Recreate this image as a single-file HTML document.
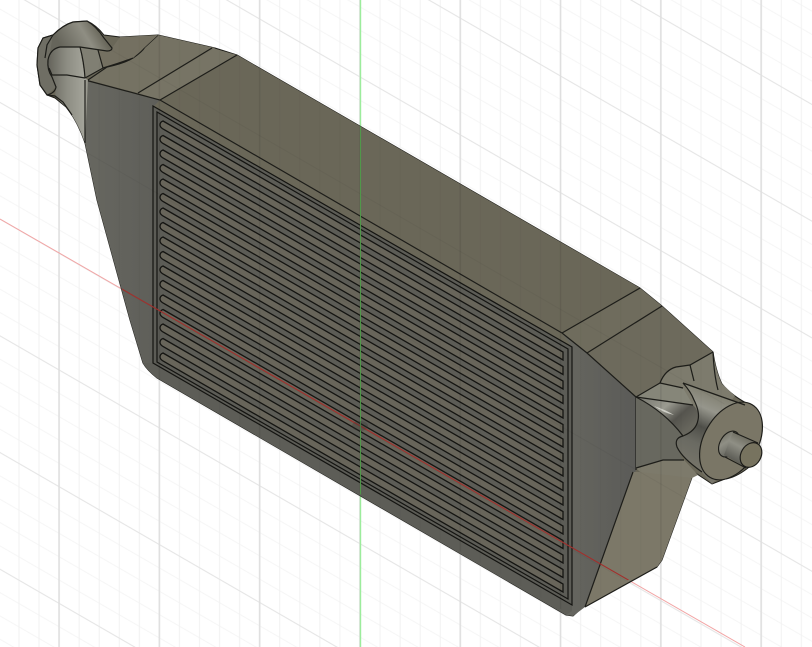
<!DOCTYPE html>
<html><head><meta charset="utf-8"><title>Intercooler CAD model</title>
<style>html,body{margin:0;padding:0;background:#fff;width:812px;height:647px;overflow:hidden}svg{display:block;filter:blur(.35px)}</style></head>
<body>
<svg width="812" height="647" viewBox="0 0 812 647" xmlns="http://www.w3.org/2000/svg">
<defs>
<pattern id="vmin" width="20.06" height="647" patternUnits="userSpaceOnUse" patternTransform="translate(350,0)"><rect x="9.5" width="1" height="647" fill="#f1f1f1"/></pattern>
<pattern id="vmaj" width="100.3" height="647" patternUnits="userSpaceOnUse" patternTransform="translate(350,0)"><rect x="9.2" width="1.5" height="647" fill="#dedede"/></pattern>
<pattern id="dmin" width="100" height="23.34" patternUnits="userSpaceOnUse" patternTransform="matrix(1,.5774,0,1,360,415.33)"><rect y="11.2" width="100" height="1" fill="#f4f4f4"/></pattern>
<pattern id="dmaj" width="100" height="116.7" patternUnits="userSpaceOnUse" patternTransform="matrix(1,.5774,0,1,360,415.33)"><rect y="11.2" width="100" height="1" fill="#e2e2e2"/></pattern>
<pattern id="vminD" width="20.06" height="647" patternUnits="userSpaceOnUse" patternTransform="translate(350,0)"><rect x="9.5" width="1" height="647" fill="#000" opacity=".03"/></pattern>
<pattern id="vmajD" width="100.3" height="647" patternUnits="userSpaceOnUse" patternTransform="translate(350,0)"><rect x="9.2" width="1.5" height="647" fill="#000" opacity=".06"/></pattern>
<pattern id="dmajD" width="100" height="116.7" patternUnits="userSpaceOnUse" patternTransform="matrix(1,.5774,0,1,360,415.33)"><rect y="11.2" width="100" height="1" fill="#000" opacity=".05"/></pattern>
<linearGradient id="gface" x1="0" y1="0" x2="1" y2="0"><stop offset="0" stop-color="#676760"/><stop offset="1" stop-color="#5e5e59"/></linearGradient>
<linearGradient id="gface2" x1="0" y1="0" x2="1" y2="0"><stop offset="0" stop-color="#66665f"/><stop offset="1" stop-color="#5b5b58"/></linearGradient>
<linearGradient id="cone" x1="695" y1="470" x2="728" y2="392" gradientUnits="userSpaceOnUse"><stop offset="0" stop-color="#77756a"/><stop offset=".3" stop-color="#6a6a62"/><stop offset=".5" stop-color="#4f4f49"/><stop offset=".72" stop-color="#96968c"/><stop offset="1" stop-color="#7a7868"/></linearGradient>
<linearGradient id="fin" x1="650" y1="392" x2="685" y2="432" gradientUnits="userSpaceOnUse"><stop offset="0" stop-color="#7d7d74"/><stop offset=".4" stop-color="#9a9a90"/><stop offset=".7" stop-color="#55544e"/><stop offset="1" stop-color="#67665d"/></linearGradient>
<linearGradient id="cyl" x1="733" y1="470" x2="752" y2="435" gradientUnits="userSpaceOnUse"><stop offset="0" stop-color="#3f3f3a"/><stop offset=".6" stop-color="#8f8f85"/><stop offset="1" stop-color="#5f5d50"/></linearGradient>
<linearGradient id="lcone" x1="45" y1="0" x2="92" y2="0" gradientUnits="userSpaceOnUse"><stop offset="0" stop-color="#5d5c54"/><stop offset=".45" stop-color="#8c8c82"/><stop offset=".85" stop-color="#a5a59b"/><stop offset="1" stop-color="#74726a"/></linearGradient>
<linearGradient id="ltop" x1="62" y1="48" x2="100" y2="25" gradientUnits="userSpaceOnUse"><stop offset="0" stop-color="#66655b"/><stop offset=".6" stop-color="#8f8e83"/><stop offset="1" stop-color="#5f5d50"/></linearGradient>
<clipPath id="model"><path d="M158,35 L237,55 L640,288 L662,306 L713,352 L730,392 L694,472 L662,560 L583,607 L573,616 L157,378 L143,363 L97,200 L85,143 L85,80 L120,37 Z"/></clipPath>
<path id="slat" d="M163,121 L563,352 V360 L163,129 Q160,127 160,125 Q160,122 163,121Z" fill="#68655a" stroke="#141411" stroke-width="1.3"/>
</defs>

<rect width="812" height="647" fill="#fff"/>
<rect width="812" height="647" fill="url(#dmin)"/>
<rect width="812" height="647" fill="url(#vmin)"/>
<rect width="812" height="647" fill="url(#dmaj)"/>
<rect width="812" height="647" fill="url(#vmaj)"/>
<line x1="0" y1="219" x2="745" y2="647" stroke="#f2a5a5" stroke-width="1"/>
<line x1="360.5" y1="0" x2="360.5" y2="647" stroke="#9cec9c" stroke-width="1.4"/>

<!-- silhouette -->
<path d="M158,35 L215,48 L237,55 L640,288 L662,306 L713,352 Q716,372 722,384 Q732,396 750,405 Q761,412 762,430 Q761,445 748,468 Q735,478 725,479 L712,484 L694,472 L662,560 L657,567 L583,607 L573,616 L566,615 L157,378 Q147,370 143,363 L130,320 L97,200 L85,143 Q78,122 66,107 L55,98 L47,95 L40,85 L37,65 L38,48 L43,38 L53,35 Q63,25 73,22 L87,21 Q96,25 104,35 L120,37 Z" fill="#6a6758" stroke="#1d1d19" stroke-width="1"/>

<!-- left face -->
<path d="M85,80 L160,100 L153,107 V363 L157,378 Q147,370 143,363 L130,320 L97,200 L85,143 Z" fill="url(#gface)"/>
<!-- top face -->
<path d="M160,100 L237,55 L640,288 L562,333 Z" fill="#6a6758"/>
<!-- left bands -->
<path d="M138,93 L212,48 L237,55 L160,100 Z" fill="#777465"/>
<path d="M88,80 L107,67 L133,58 L145,47 L158,35 L215,48 L138,93 Z" fill="#757263"/>
<!-- right bands -->
<path d="M562,333 L640,288 L662,306 L587,353 Z" fill="#6f6c5d"/>
<path d="M587,353 L662,306 L713,352 L636,397 Z" fill="#6d6a5c"/>
<!-- right grey face -->
<path d="M562,333 L587,353 L636,397 V470 L585,607 L573,616 L566,615 L572,605 V347 Z" fill="url(#gface2)"/>
<!-- right olive face -->
<path d="M633,472 L694,472 L662,560 L657,567 L585,607 Z" fill="#7c7868"/>

<!-- bottom band and front panel -->
<path d="M153,363 L572,605 L572,611 L566,615 L157,378 Q147,370 143,363 Z" fill="#5d5d57"/>
<path d="M153,106 L572,347 V605 L153,363 Z" fill="#5c5c56" stroke="#141411" stroke-width="1.2"/>
<path d="M157,112 L568,349 V599 L157,362 Z" fill="#5c5c56" stroke="#141411" stroke-width="1.2"/>
<use href="#slat"/>
<use href="#slat" y="14.5"/>
<use href="#slat" y="29"/>
<use href="#slat" y="43.5"/>
<use href="#slat" y="58"/>
<use href="#slat" y="72.5"/>
<use href="#slat" y="87"/>
<use href="#slat" y="101.5"/>
<use href="#slat" y="116"/>
<use href="#slat" y="130.5"/>
<use href="#slat" y="145"/>
<use href="#slat" y="159.5"/>
<use href="#slat" y="174"/>
<use href="#slat" y="188.5"/>
<use href="#slat" y="203"/>
<use href="#slat" y="217.5"/>
<use href="#slat" y="232"/>

<!-- edges of body -->
<g fill="none" stroke="#1d1d19" stroke-width="1.2">
<path d="M85,80 L160,100 L562,333"/>
<path d="M138,93 L212,48"/>
<path d="M160,100 L237,55"/>
<path d="M562,333 L640,288"/>
<path d="M587,353 L662,306"/>
<path d="M562,333 L587,353 L636,397"/>
<path d="M636,397 V470"/>
<path d="M633,472 L585,607"/>
<path d="M585,607 L657,567"/>
<path d="M88,80 L107,67 Q125,63 133,58 Q142,52 145,47 L158,35"/>
</g>

<!-- right connector -->
<path d="M636,397 L660,383 Q665,370 676,367 L690,365 L713,352 Q716,372 722,384 L735,396 L700,440 L680,436 Z" fill="#7d7b6d"/>
<path d="M636,397 L660,383 L683,388 L693,405 Z" fill="#868679"/>
<path d="M636,397 L693,405 Q700,412 698,420 Q696,431 683,436 Q665,412 636,397 Z" fill="url(#fin)"/>
<path d="M636,397 Q665,412 683,436 Q674,438 677,447 L683,460 L663,460 L636,468 Z" fill="#68685f"/>
<path d="M636,468 L663,460 L684,460 L698,475 L692,478 L640,472 Z" fill="#7d7a6b"/>
<path d="M683,383 L745,405 L761,430 L712,484 L702,472 Q682,458 677,447 Q674,438 683,436 Q696,431 698,420 Q700,412 694,400 Q691,392 683,383 Z" fill="url(#cone)"/>
<path d="M654,406 Q666,410 674,415 Q664,413 654,406Z" fill="#cfcfc7"/>
<g transform="rotate(-60 731 441)"><ellipse cx="731" cy="441" rx="42" ry="27" fill="#7a7666" stroke="#1d1d19" stroke-width="1.2"/></g>
<g transform="rotate(-60 729 444)"><ellipse cx="729" cy="444" rx="14" ry="9" fill="url(#cyl)" stroke="#1d1d19" stroke-width="1.1"/></g>
<path d="M733,432 L760,444 L747,468 L724,455 Z" fill="url(#cyl)"/>
<path d="M733,432 L758,443 M725,457 L746,468" stroke="#1d1d19" stroke-width="1.1" fill="none"/>
<g transform="rotate(-60 751 455)"><ellipse cx="751" cy="455" rx="13" ry="10" fill="#77735f" stroke="#1d1d19" stroke-width="1.2"/></g>
<g fill="none" stroke="#1d1d19" stroke-width="1.2">
<path d="M636,397 L660,383 Q665,370 676,367 L690,365 L713,352"/>
<path d="M660,383 L683,388"/>
<path d="M690,365 L694,381"/>
<path d="M713,352 Q714,375 718,390"/>
<path d="M636,397 L693,405"/>
<path d="M636,397 Q665,412 683,436"/>
<path d="M683,383 Q691,392 694,400 Q700,412 698,420 Q696,431 683,436 Q674,438 677,447 Q682,458 702,472"/>
<path d="M683,383 L745,405"/>
<path d="M636,468 L663,460 L684,460"/>
</g>

<!-- left connector -->
<path d="M53,35 Q63,25 73,22 L87,21 L97,28 L112,48 L107,51 L80,47 L60,47 L50,52 Z" fill="url(#ltop)"/>
<path d="M50,52 L60,47 L80,47 L85,78 L88,80 L85,143 Q78,122 66,107 L55,96 L56,87 L52,77 L47,62 Z" fill="url(#lcone)"/>
<path d="M80,47 L98,50 L103,68 L85,78 Z" fill="#807f73"/>
<path d="M98,50 L107,51 L112,48 L120,37 L158,35 L145,47 L133,58 L107,67 L103,68 Z" fill="#747061"/>
<path d="M38,48 L43,38 L53,35 L50,52 L47,62 L52,77 L56,87 L47,95 L40,85 L37,65 Z" fill="#6f6e64"/>
<g fill="none" stroke="#1d1d19" stroke-width="1.2">
<path d="M38,48 L43,38 L53,35 Q63,25 73,22 L87,21 Q96,26 104,38 L112,48 Q112,51 107,51 L80,47 L60,47 Q50,49 48,60 Q47,70 52,77 L56,87 Q55,93 47,95 L40,85 L37,65 Z"/>
<path d="M80,47 Q84,62 85,78"/>
<path d="M98,50 L103,68"/>
<path d="M49,68 L52,75 L67,75 L85,78"/>
<path d="M85,78 L103,68 Q120,63 133,58"/>
<path d="M47,95 L55,96 L63,102 L72,115"/>
<path d="M85,80 V143"/>
<path d="M53,35 L47,45 L45,58"/>
</g>

<!-- faint grid through the model -->
<g clip-path="url(#model)">
<rect width="812" height="647" fill="url(#vminD)"/>
<rect width="812" height="647" fill="url(#vmajD)"/>
<rect width="812" height="647" fill="url(#dmajD)"/>
<line x1="0" y1="219" x2="745" y2="647" stroke="#a22f2c" stroke-width="1.1"/>
<line x1="360.5" y1="0" x2="360.5" y2="647" stroke="#4f9f4a" stroke-width="1.1" opacity=".9"/>
</g>
<ellipse cx="360" cy="426" rx="8" ry="5" fill="#33332e" opacity=".3"/>
</svg>
</body></html>
